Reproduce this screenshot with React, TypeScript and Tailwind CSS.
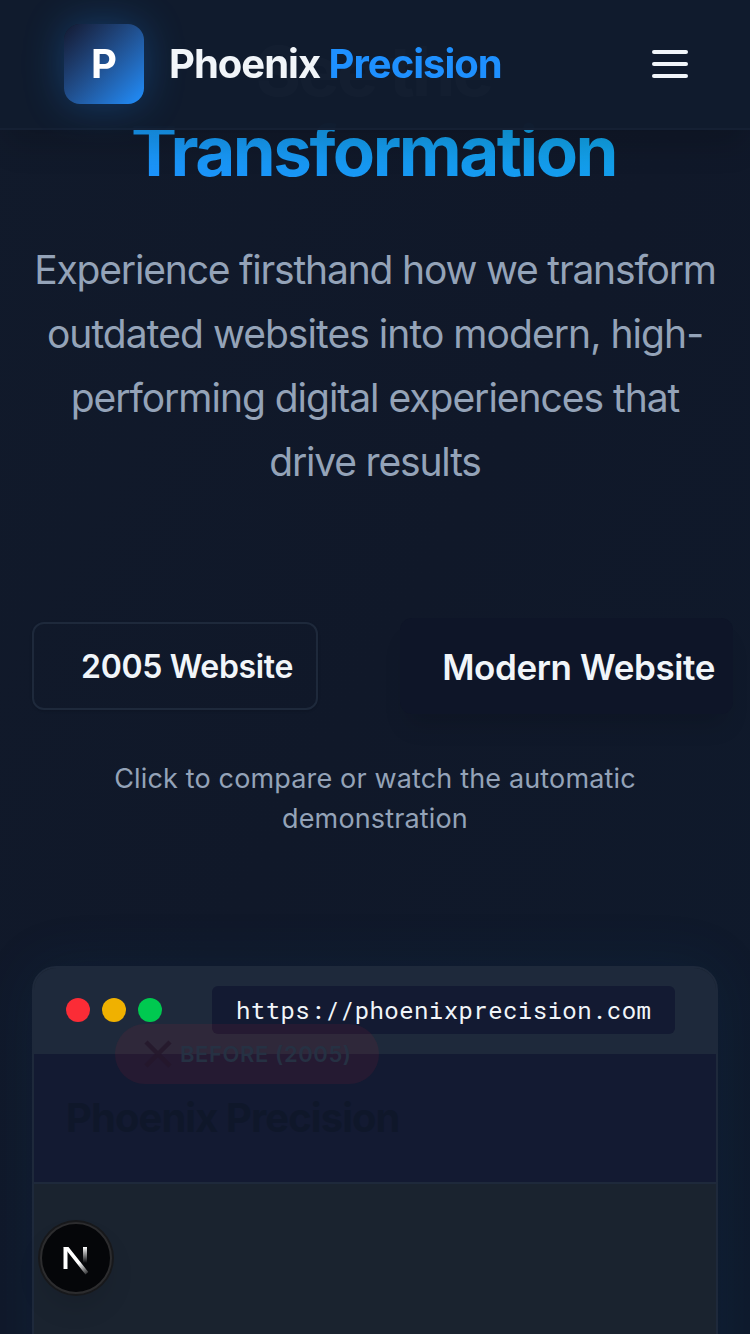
const SANS = "font-['Inter','Liberation_Sans',sans-serif]";

function Header() {
  return (
    <header className="fixed inset-x-0 top-0 z-20 flex h-[130px] items-center justify-between border-b-2 border-[#1e293b]/40 bg-[#101b2e]/99 pr-[62px] pl-16 shadow-[0_20px_30px_-6px_rgba(0,0,0,0.16)]">
      <div className="flex items-center">
        <div className="flex size-20 items-center justify-center rounded-2xl bg-linear-to-br from-[#131a32] to-[#1e90ff] shadow-[0_0_40px_rgba(30,144,255,0.3)]">
          <span className="text-[40px] leading-none font-bold text-white">P</span>
        </div>
        <span className="ml-[25px] text-[40px] leading-[56px] font-bold tracking-[-1px] whitespace-nowrap text-slate-100">
          Phoenix <span className="text-[#1e90ff]">Precision</span>
        </span>
      </div>
      <button aria-label="Menu" className="flex w-9 flex-col gap-2">
        <span className="h-1 rounded-full bg-slate-100" />
        <span className="h-1 rounded-full bg-slate-100" />
        <span className="h-1 rounded-full bg-slate-100" />
      </button>
    </header>
  );
}

function Hero() {
  return (
    <section className="flex flex-col items-center text-center">
      <h1 className="pr-[3px] text-[69px] leading-[80px] font-bold tracking-[-2.5px] text-slate-100">
        <span className="block">See the</span>
        <span className="block bg-linear-to-tr from-[#1e90ff] to-[#0ea5e0] bg-clip-text text-transparent">
          Transformation
        </span>
      </h1>
      <p className="mt-[47px] text-[39px] leading-[64px] tracking-[-1.18px] whitespace-nowrap text-[#94a3b8]">
        <span className="block">Experience firsthand how we transform</span>
        <span className="block tracking-[-0.95px]">outdated websites into modern, high-</span>
        <span className="block tracking-[-1.03px]">performing digital experiences that</span>
        <span className="block">drive results</span>
      </p>
    </section>
  );
}

function Toggle() {
  return (
    <section className="mt-[124px] flex flex-col">
      <div className="flex items-center whitespace-nowrap">
        <button className="flex h-[88px] w-[286px] shrink-0 items-center justify-end rounded-xl border-2 border-[#1e293b] pt-0.5 pr-[23px] text-[32px] font-semibold tracking-[-0.35px] text-slate-100 shadow-sm">
          2005 Website
        </button>
        <button className="ml-[82px] flex h-24 w-[333px] shrink-0 items-center justify-end rounded-xl bg-[#0e1528] pt-0.5 pr-[18px] text-[35px] font-semibold tracking-[-0.38px] text-slate-100 shadow-[0_18px_24px_-8px_rgba(0,0,0,0.14)]">
          Modern Website
        </button>
      </div>
      <p className="mt-[45px] text-center text-[27px] leading-10 tracking-[0.15px] text-[#94a3b8]">
        Click to compare or watch the automatic
        <br />
        demonstration
      </p>
    </section>
  );
}

function BeforeBadge() {
  return (
    <div className="absolute top-[56px] left-[81px] flex h-[60px] w-[264px] items-center rounded-full bg-[#fb2c36]/8 pl-[29px]">
      <svg viewBox="0 0 28 28" className="size-7" fill="none" stroke="#24162a" strokeOpacity="0.8" strokeWidth="4.5">
        <path d="M2 2 26 26M26 2 2 26" />
      </svg>
      <span className="ml-2 text-[22px] font-semibold tracking-[0.6px] whitespace-nowrap text-[#263143]">BEFORE (2005)</span>
    </div>
  );
}

function Browser() {
  return (
    <section className="relative mt-[127px] flex h-[600px] flex-col rounded-3xl border-2 border-[#1e293b] bg-[#1a232f] shadow-[0_0_60px_rgba(14,100,160,0.1)]">
      <div className="flex h-[86px] items-center rounded-t-[22px] border-b-2 border-[#1e293b] bg-[#1e293b] pl-8">
        <div className="flex gap-3">
          <span className="size-6 rounded-full bg-[#fb2c36]" />
          <span className="size-6 rounded-full bg-[#f0b100]" />
          <span className="size-6 rounded-full bg-[#00c950]" />
        </div>
        <div className="ml-[50px] flex h-12 w-[463px] items-center rounded-md bg-[#131a32] pl-6 font-['Roboto_Mono','Liberation_Mono',monospace] text-[24px] tracking-[0.43px] text-slate-100">
          https://phoenixprecision.com
        </div>
      </div>
      <div className="flex h-[130px] items-center border-b-2 border-[#1e293b] bg-[#131a32] pl-8">
        <span className="text-[40px] font-bold tracking-[-0.95px] text-[#0f172a]">Phoenix Precision</span>
      </div>
      <BeforeBadge />
    </section>
  );
}

function DevBadge() {
  return (
    <div className="fixed top-[1222px] left-[40px] z-10 flex size-[72px] items-center justify-center rounded-full border-2 border-[#2c2c2e] bg-[#050609] shadow-[0_0_0_2px_#17181b,0_16px_32px_-8px_rgba(0,0,0,0.16)]">
      <svg viewBox="0 0 28 30" className="mt-1 h-[30px] w-7" fill="none">
        <defs>
          <linearGradient id="stem" x1="0" y1="2" x2="0" y2="18" gradientUnits="userSpaceOnUse">
            <stop stopColor="#fff" />
            <stop offset="1" stopColor="#fff" stopOpacity="0" />
          </linearGradient>
          <linearGradient id="diagonal" x1="17" y1="18" x2="27" y2="31" gradientUnits="userSpaceOnUse">
            <stop stopColor="#fff" />
            <stop offset="1" stopColor="#fff" stopOpacity="0" />
          </linearGradient>
        </defs>
        <path d="M1.5 2H5.5V24H1.5Z" fill="#fff" />
        <path d="M1.5 2H6.5L26.3 27L23.5 29.5L3 3.5Z" fill="url(#diagonal)" />
        <path d="M21 2H25V18H21Z" fill="url(#stem)" />
      </svg>
    </div>
  );
}

export default function App() {
  return (
    <div className={`${SANS} relative h-[1334px] w-[750px] overflow-hidden bg-linear-to-br from-[#111a2b] via-[#101829] to-[#0f1a2c]`}>
      <Header />
      <main className="flex flex-col px-8 pt-[31px]">
        <Hero />
        <Toggle />
        <Browser />
      </main>
      <DevBadge />
    </div>
  );
}
